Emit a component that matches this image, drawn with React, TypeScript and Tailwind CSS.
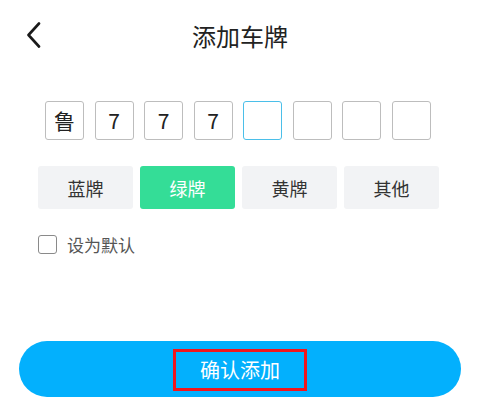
import { useState } from "react";

const PLATE = ["鲁", "7", "7", "7", "", "", "", ""];
const TYPES = ["蓝牌", "绿牌", "黄牌", "其他"];

const FONT = { fontFamily: '"Noto Sans CJK SC", "Noto Sans", sans-serif' };

export default function App() {
  const [type, setType] = useState(1);
  const [isDefault, setIsDefault] = useState(false);
  const active = 4;

  return (
    <div className="w-[480px] h-[408px] bg-white flex flex-col text-[#222]" style={FONT}>
      <div className="relative h-[70px] flex items-center justify-center">
        <button className="absolute left-[24px] top-[22px] w-[18px] h-[26px] flex items-center justify-center">
          <svg width="15" height="26" viewBox="0 0 15 26" fill="none">
            <path d="M13 1.5L2.5 13L13 24.5" stroke="#1a1a1a" strokeWidth="2.6" strokeLinecap="round" strokeLinejoin="round" />
          </svg>
        </button>
        <h1 className="text-[24px] leading-none text-[#222] mt-[1px]">添加车牌</h1>
      </div>

      <div className="mt-[31px] pl-[45px] flex gap-[10.5px]">
        {PLATE.map((c, i) => (
          <div
            key={i}
            className={`w-[39px] h-[39px] rounded-[3px] border flex items-center justify-center text-[21px] leading-none text-[#222] ${
              i === active ? "border-[#4bbfe9]" : "border-[#bdbdbd]"
            }`}
          >
            {c}
          </div>
        ))}
      </div>

      <div className="mt-[26px] pl-[38px] flex gap-[7px]">
        {TYPES.map((t, i) => (
          <button
            key={t}
            onClick={() => setType(i)}
            className={`w-[95px] h-[43px] rounded-[3px] flex items-center justify-center text-[18px] leading-none ${
              type === i ? "bg-[#34dd97] text-white" : "bg-[#f2f3f5] text-[#333]"
            }`}
          >
            {t}
          </button>
        ))}
      </div>

      <label className="mt-[26px] ml-[38px] flex items-center gap-[10px] cursor-pointer">
        <input
          type="checkbox"
          checked={isDefault}
          onChange={(e) => setIsDefault(e.target.checked)}
          className="appearance-none w-[19px] h-[19px] rounded-[3px] border border-[#8a8a8a] bg-white"
        />
        <span className="text-[17px] leading-none text-[#555]">设为默认</span>
      </label>

      <button className="mt-[87px] ml-[19px] w-[442px] h-[56px] rounded-full bg-[#03b0fd] flex items-center justify-center">
        <span className="w-[134px] h-[42px] mt-[2px] border-[3px] border-[#f2151c] flex items-center justify-center text-[20px] leading-none text-white">
          确认添加
        </span>
      </button>
    </div>
  );
}
